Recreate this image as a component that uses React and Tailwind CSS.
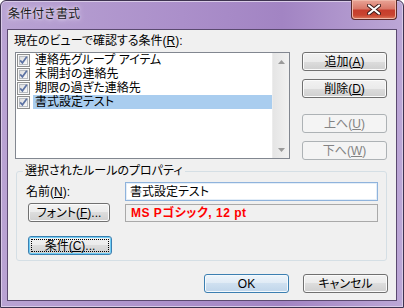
import React from 'react';

const font = "font-['Liberation_Sans','Noto_Sans_CJK_JP',sans-serif]";

const Btn = ({ children, kind = 'normal', className = '' }) => {
  const styles = {
    normal:
      'border-[#707070] text-black bg-[linear-gradient(to_bottom,#f2f2f2_0%,#ebebeb_50%,#dddddd_50%,#cfcfcf_100%)] shadow-[inset_0_0_0_1px_#fbfbfb]',
    default:
      'border-[#3c7fb1] text-black bg-[linear-gradient(to_bottom,#eef5fb_0%,#dfeaf5_50%,#cfe0f0_50%,#bfd5ea_100%)] shadow-[inset_0_0_0_1px_#f4f9fd]',
    focus:
      'border-[#3c7fb1] text-black bg-[linear-gradient(to_bottom,#f2f2f2_0%,#ebebeb_50%,#dddddd_50%,#cfcfcf_100%)] shadow-[inset_0_0_0_1px_#6fcdf5]',
    disabled: 'border-[#adb2b5] text-[#838383] bg-[#f4f4f4]',
  };
  return (
    <div
      className={`relative h-[19px] flex items-center justify-center border rounded-[3px] text-[12px] leading-[14px] [font-feature-settings:'palt'] ${styles[kind]} ${className}`}
    >
      {kind === 'focus' && (
        <span className="absolute inset-[2px] border border-dotted border-black rounded-[1px]" />
      )}
      <span className="relative">{children}</span>
    </div>
  );
};

const Check = () => (
  <svg width="13" height="13" viewBox="0 0 13 13" className="shrink-0">
    <defs>
      <linearGradient id="cb" x1="0" y1="0" x2="1" y2="1">
        <stop offset="0" stopColor="#dcdcdc" />
        <stop offset="1" stopColor="#fbfbfb" />
      </linearGradient>
    </defs>
    <rect x="0.5" y="0.5" width="12" height="12" fill="#f6f6f6" stroke="#8e8f8f" />
    <rect x="2.5" y="2.5" width="8" height="8" fill="url(#cb)" stroke="#b8bcc2" />
    <path d="M3.2 6.4 L5.4 8.8 L9.8 2.8" fill="none" stroke="#5c72a3" strokeWidth="1.7" />
  </svg>
);

const items = ['連絡先グループ アイテム', '未開封の連絡先', '期限の過ぎた連絡先', '書式設定テスト'];

export default function App() {
  return (
    <div
      className={`${font} w-[404px] h-[308px] flex flex-col border border-[#3e3350] rounded-t-[6px] px-[6px] pb-[6px] bg-[linear-gradient(to_right,#b9a3d3_0%,#ab8fca_45%,#a284c3_70%,#bca7d6_100%)] shadow-[inset_0_0_0_1px_#d9cbe8]`}
    >
      {/* title bar */}
      <div className="h-[28px] flex items-start shrink-0">
        <div className="pl-[1px] pt-[6px] text-[12px] leading-[14px] text-[#1a1a1a] [text-shadow:0_0_6px_#efe6f7,0_0_3px_#efe6f7]">
          条件付き書式
        </div>
        <div className="ml-auto -mt-[1px] w-[46px] h-[20px] flex items-center justify-center border border-[#5a2b2a] border-t-0 rounded-b-[4px] bg-[linear-gradient(to_bottom,#e9a496_0%,#d9796a_45%,#c63d2c_55%,#c94530_80%,#dc7a5e_100%)] shadow-[inset_0_0_0_1px_#f0b7a8]">
          <svg width="14" height="11" viewBox="0 0 14 11">
            <path d="M2 1.5 L12 9.5 M12 1.5 L2 9.5" stroke="#3b1a18" strokeWidth="4" strokeLinecap="round" />
            <path d="M2 1.5 L12 9.5 M12 1.5 L2 9.5" stroke="#ffffff" strokeWidth="2.2" strokeLinecap="round" />
          </svg>
        </div>
      </div>

      {/* client area */}
      <div className="flex-1 flex flex-col border border-[#5b4a70] bg-[#f0f0f0] text-[12px] leading-[14px] text-black [font-feature-settings:'palt']">
        <div className="flex pt-[4px]">
          <div className="ml-[7px] w-[275px] flex flex-col">
            <div className="-ml-[1px] h-[14px]">
              現在のビューで確認する条件(<span className="underline">R</span>):
            </div>
            <div className="mt-[4px] h-[107px] flex border border-[#828790] bg-white">
              <div className="flex-1 flex flex-col pl-[1px]">
                {items.map((t, i) => (
                  <div key={t} className="h-[14px] flex items-center">
                    <Check />
                    <div
                      className={`ml-[3px] flex-1 h-[14px] pl-[2px] whitespace-nowrap ${
                        i === 3 ? 'bg-[#a9cdef]' : ''
                      }`}
                    >
                      {t}
                    </div>
                  </div>
                ))}
              </div>
              <div className="w-[17px] flex flex-col justify-between bg-[linear-gradient(to_right,#e5e5e5,#f1f1f1)] border-l border-[#ececec]">
                <div className="h-[17px] flex items-center justify-center">
                  <svg width="7" height="4" viewBox="0 0 7 4">
                    <path d="M0 4 L3.5 0 L7 4 Z" fill="#9a9a9a" />
                  </svg>
                </div>
                <div className="h-[17px] flex items-center justify-center">
                  <svg width="7" height="4" viewBox="0 0 7 4">
                    <path d="M0 0 L3.5 4 L7 0 Z" fill="#9a9a9a" />
                  </svg>
                </div>
              </div>
            </div>
          </div>
          <div className="ml-[12px] w-[85px] flex flex-col pt-[18px]">
            <Btn>追加(<span className="underline">A</span>)</Btn>
            <Btn className="mt-[8px]">削除(<span className="underline">D</span>)</Btn>
            <Btn kind="disabled" className="mt-[16px]">上へ(<span className="underline">U</span>)</Btn>
            <Btn kind="disabled" className="mt-[8px]">下へ(<span className="underline">W</span>)</Btn>
          </div>
        </div>

        {/* rule properties group */}
        <fieldset className="ml-[8px] mt-[4px] w-[371px] border border-[#d5dfe5] rounded-[3px] p-0 pb-[5px]">
          <legend className="ml-[6px] px-[2px] h-[14px] text-[12px] leading-[14px]">
            選択されたルールのプロパティ
          </legend>
          <div className="mt-[4px] h-[19px] flex items-center">
            <div className="ml-[9px] w-[99px]">
              名前(<span className="underline">N</span>):
            </div>
            <div className="w-[253px] h-[19px] flex items-center pl-[4px] bg-white border border-[#8fb3dc] shadow-[inset_0_0_0_1px_#e4eef8]">
              書式設定テスト
            </div>
          </div>
          <div className="mt-[2px] h-[19px] flex items-center">
            <Btn className="ml-[11px] w-[82px]">フォント(<span className="underline">F</span>)...</Btn>
            <div className="ml-[15px] w-[253px] h-[18px] mt-[1px] flex items-center pl-[5px] bg-[#f0f0f0] border border-[#a9a9a9] text-[#ff0000] font-bold tracking-[0.5px]">
              MS Pゴシック, 12 pt
            </div>
          </div>
          <div className="mt-[14px] flex">
            <Btn kind="focus" className="ml-[11px] w-[84px]">条件(<span className="underline">C</span>)...</Btn>
          </div>
        </fieldset>

        {/* dialog buttons */}
        <div className="mt-[13px] flex justify-end pr-[8px] gap-[14px]">
          <Btn kind="default" className="w-[85px]">OK</Btn>
          <Btn className="w-[85px]">キャンセル</Btn>
        </div>
      </div>
    </div>
  );
}
